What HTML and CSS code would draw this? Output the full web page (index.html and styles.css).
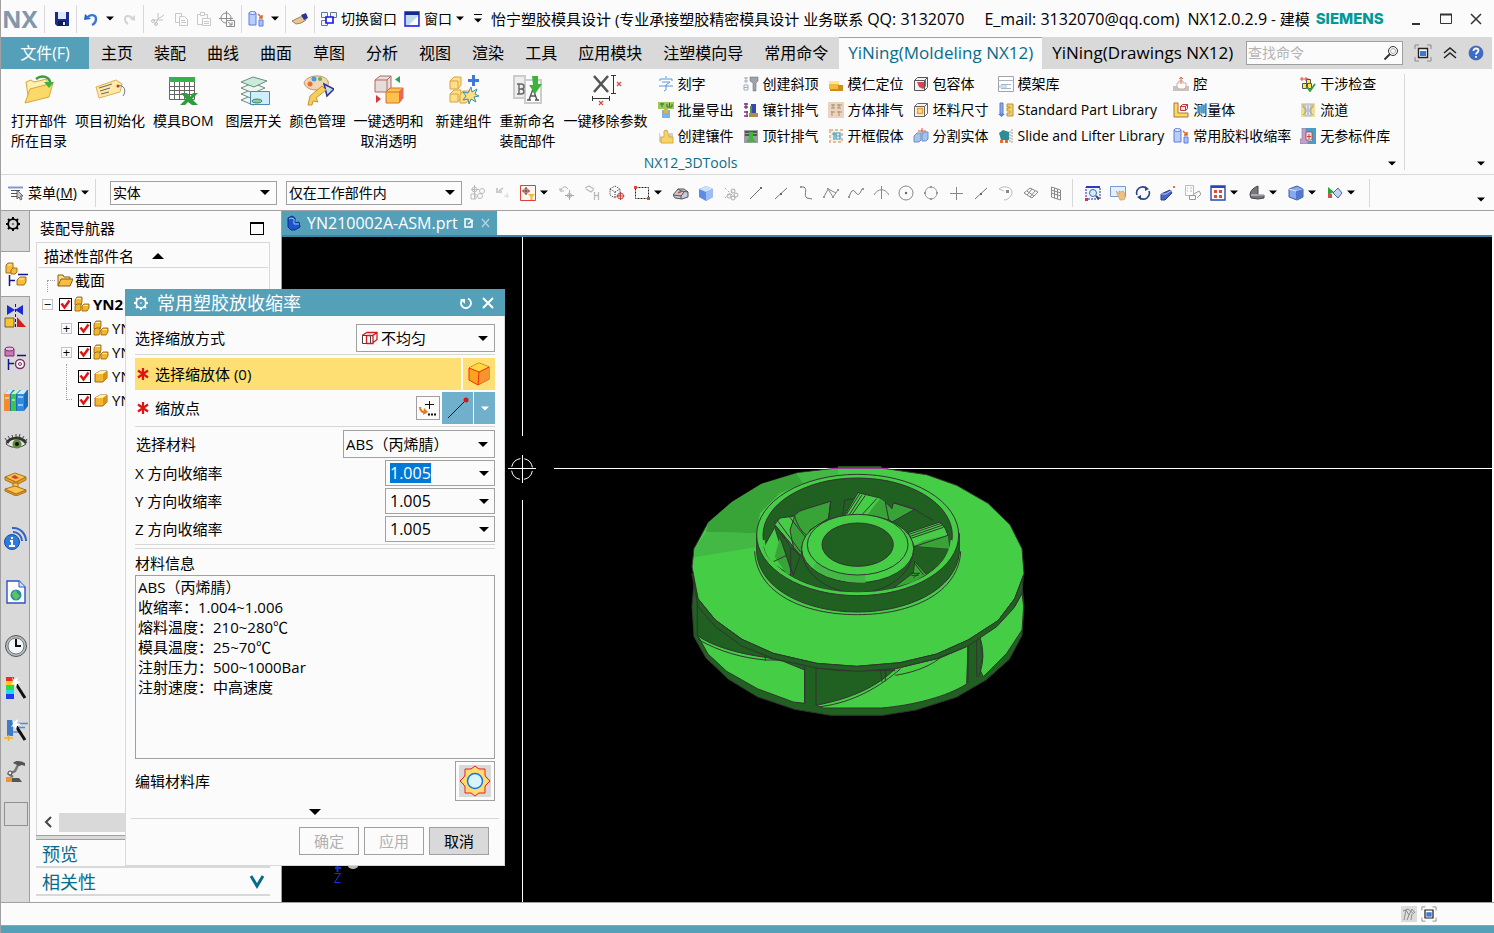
FILE: index.html
```html
<!DOCTYPE html>
<html lang="zh-CN">
<head>
  <meta charset="utf-8">
  <title>NX12.0.2.9 - 建模</title>
  <link rel="stylesheet" href="styles.css">
</head>
<body>

  <!-- icons -->
  <svg class="sprite" aria-hidden="true">
    <symbol id="save" viewBox="0 0 16 16"><path d="M1 1h14v14H3l-2-2z" fill="#1c2c8c"/><path d="M4 1h8v7H4z" fill="#dfe9f7"/><path d="M4 10h8v5H4z" fill="#111a4a"/><path d="M9 11h2v3H9z" fill="#dfe9f7"/></symbol>
    <symbol id="undo" viewBox="0 0 16 16"><path d="M1 9l1-6 6 5z" fill="#2a62c4"/><path d="M4 7c3-4 9-4 9 1 0 3-2 5-4 6" fill="none" stroke="#3a76d4" stroke-width="2.4"/></symbol>
    <symbol id="redo" viewBox="0 0 16 16"><path d="M14 10V4L9 8z" fill="#d4d4d4"/><path d="M12 8C9 4 4 4 4 8c0 2 1 4 3 5" fill="none" stroke="#d4d4d4" stroke-width="2"/></symbol>
    <symbol id="cut" viewBox="0 0 16 16"><g fill="none" stroke="#c4c4c4"><path d="M2 9h11M8 2v6l6-4M8 8l-3 6"/><circle cx="3" cy="10" r="1.5"/><circle cx="6" cy="13" r="1.5"/></g></symbol>
    <symbol id="copy" viewBox="0 0 16 16"><g fill="#fbfbfb" stroke="#c8c8c8"><path d="M2.500 2.500h6v9h-6z"/><path d="M6.500 5.500h5l3 3v6h-8z"/><path d="M8 9.500h4M8 11.500h5"/></g></symbol>
    <symbol id="paste" viewBox="0 0 16 16"><g fill="#fbfbfb" stroke="#c8c8c8"><path d="M1.500 3.500h10v10h-10z"/><path d="M4.500 1.500h4v3h-4z"/><path d="M6.500 7.500h8v7h-8zM8 10.500h5M8 12.500h5"/></g></symbol>
    <symbol id="snap" viewBox="0 0 16 16"><g fill="none" stroke="#8c8c8c"><circle cx="7" cy="7" r="5"/><path d="M7.500 0v14M0 7.500h14"/><path d="M7.500 9.500h8v6h-8z" fill="#fbfbfb"/><path d="M9 11l4 3M13 11v3h-3"/></g></symbol>
    <symbol id="shrink" viewBox="0 0 16 16"><path d="M1 2h7v12H1z" fill="#b9cdfa" stroke="#5c7ce0"/><ellipse cx="4.500" cy="2" rx="3.500" ry="1.500" fill="#e8effe" stroke="#5c7ce0"/><path d="M11 9h4v6h-4z" fill="#a9c2fa" stroke="#5c7ce0"/><path d="M10 3l4 4m0-3v3h-3" fill="none" stroke="#e0622a" stroke-width="1.400"/></symbol>
    <symbol id="touch" viewBox="0 0 16 16"><path d="M0 10l8-4 5-1 1 4-5 3-5 1z" fill="#eac491" stroke="#8a6a48" stroke-width=".8"/><path d="M9 4l5-2 2 5-4 2z" fill="#27359b"/></symbol>
    <symbol id="switchwin" viewBox="0 0 16 16"><g fill="#eef2fa" stroke="#6c7890"><path d="M.5 1.500h6v5h-6zM9.500 1.500h6v5h-6zM.5 9.500h6v5h-6z"/></g><path d="M5 6h7v6H5z" fill="#fff" stroke="#1414f0" stroke-width="1.600"/></symbol>
    <symbol id="win" viewBox="0 0 16 16"><path d="M1 1h14v14H1z" fill="#bfdcea" stroke="#1414f0" stroke-width="1.400"/><path d="M5 14L14 5v9z" fill="#fff"/><path d="M1 1h14v3H1z" fill="#142a8c"/></symbol>
    <symbol id="lens" viewBox="0 0 16 16"><g fill="none" stroke="#333"><circle cx="10" cy="6" r="4.500"/><circle cx="10" cy="6" r="2.500" stroke="#999" stroke-width=".8"/><path d="M7 9l-5.500 5.500" stroke-width="2"/></g></symbol>
    <symbol id="fit" viewBox="0 0 18 18"><path d="M1 5V1h4M13 1h4v4M17 13v4h-4M5 17H1v-4" fill="none" stroke="#888"/><path d="M4.500 4.500h9v9h-9z" fill="#fff" stroke="#222" stroke-width="1.400"/><path d="M6 7h6v5H6z" fill="#3c78d8"/></symbol>
    <symbol id="help" viewBox="0 0 16 16"><circle cx="8" cy="8" r="7" fill="#3c6cc8" stroke="#2a4c9c" stroke-width=".6"/><path d="M5.500 6c0-3.500 5-3 5-.4C10.500 7.500 8 7.400 8 9.500M8 11v1.800" fill="none" stroke="#fff" stroke-width="1.800"/></symbol>

    <symbol id="b-folder" viewBox="0 0 32 32"><path d="M3 8l5-2 3 2 13-3v10L6 28z" fill="#fff0b0" stroke="#d5a63a"/><path d="M2 29l5-14 23-6-4 14z" fill="#fbd968" stroke="#d5a63a"/><path d="M13 5c6-5 14-2 14 4" fill="none" stroke="#3c9c3c" stroke-width="2.500"/><path d="M21 8h10l-5 6z" fill="#3cb43c"/></symbol>
    <symbol id="b-tag" viewBox="0 0 32 32"><path d="M2 13l20-7 6 4-2 8-21 6z" fill="#ffe9a8" stroke="#e0b050"/><path d="M5 14l13-4M6 17l10-3M7 20l8-2" stroke="#666"/><circle cx="24" cy="12" r="1.500" fill="#b03030"/><path d="M24 12c6-2 9 5 5 10" fill="none" stroke="#777"/></symbol>
    <symbol id="b-bom" viewBox="0 0 32 32"><path d="M2.500 3.500h25v22h-25z" fill="#fff" stroke="#666"/><path d="M2 3h26v5H2z" fill="#36b24a"/><path d="M2 12.500h26M2 16.500h26M2 20.500h26M7.500 8v18M12.500 8v18M17.500 8v18M22.500 8v18" stroke="#666"/><path d="M14 19h6l3 4 3-4h5l-6 6 6 6h-6l-4-3-3 3h-5l6-6z" fill="#2c9c3c"/></symbol>
    <symbol id="b-layer" viewBox="0 0 32 32"><g fill="#eef6ee" stroke="#6c8c84"><path d="M3 26l12-5 12 5-12 5z"/><path d="M3 20l12-5 12 5-12 5z"/><path d="M3 14l12-5 12 5-12 5z"/><path d="M3 8l12-5 14 4-13 6z" fill="#c9ecd8"/></g><path d="M12.500 17.500h19v13h-19z" fill="#cdeefa" stroke="#4a8cb4"/><ellipse cx="19" cy="27" rx="5" ry="2" fill="#8ccaa4" stroke="#4a8c64"/></symbol>
    <symbol id="b-color" viewBox="0 0 32 32"><path d="M2 9C4 1 22-1 26 7c2 6-4 6-8 8S4 16 2 9z" fill="#f3d5b4" stroke="#c8935c"/><circle cx="8" cy="10" r="2.500" fill="#e07040"/><circle cx="12" cy="5" r="2.500" fill="#3c9cf0"/><circle cx="18" cy="5" r="2" fill="#58b858"/><path d="M22 10l10 5-7 7z" fill="#d0d8f4" stroke="#24348c" stroke-width="1.500"/><path d="M6 31l2-9 12-10 4 4-10 8 2 4-5-1-1 4z" fill="#f4cf5c" stroke="#c89434"/></symbol>
    <symbol id="b-trans" viewBox="0 0 32 32"><path d="M2 6l5-4h11v12l-4 4H2z" fill="#e6dcdc" stroke="#b06a5c"/><path d="M2 6h12v12M14 6l4-4" fill="none" stroke="#b06a5c"/><path d="M13 18l4-4h13v10l-4 5H13z" fill="#fbc34c" stroke="#d8702c"/><path d="M13 18h13l4-4" fill="none" stroke="#d8702c"/><path d="M26 18v11l4-5V14z" fill="#e8685c"/><path d="M27 2v7l-5-3.500z" fill="#2ca44c"/><path d="M3 21v8l5-4z" fill="#d03c3c"/></symbol>
    <symbol id="b-new" viewBox="0 0 32 32"><g fill="#ffe08a" stroke="#d8a23c"><path d="M2 7l4-4h7v8l-3 4H2z"/><path d="M2 20l4-4h7v8l-3 4H2z"/><path d="M12 21l3-4h6v8l-3 4h-6z"/><path d="M2 7h8v7M2 20h8v7" fill="none"/></g><path d="M25.500 1v11M20 6.500h11" stroke="#3c78e0" stroke-width="3"/><path d="M23 13l1 5 5-3-2 5 4 2-5 1 2 5-5-3-2 5-1-5-5 1 3-4-3-4 5 1z" fill="#fbe07c" stroke="#3c8cc0"/></symbol>
    <symbol id="b-rename" viewBox="0 0 32 32"><path d="M2 2h11v22H2z" fill="#eee" stroke="#ccc" stroke-width="2"/><path d="M13 6h16v23H13z" fill="#fbfbfb" stroke="#ccc" stroke-width="2"/><path d="M7 10v10M5 10h4c4 0 4 5 0 5H7M9 15c4 0 4 5 0 5H5" fill="none" stroke="#666" stroke-width="1.400"/><path d="M17 26l4-11 4 11M18 22h6M15 26h4M23 26h4" fill="none" stroke="#555" stroke-width="1.400"/><path d="M20 2h6v8h4l-7 10-6-9h4z" fill="#3cb43c"/></symbol>
    <symbol id="b-param" viewBox="0 0 32 32"><path d="M4 2l14 16M18 2L4 18" stroke="#555" stroke-width="2.600"/><path d="M23.500 2v17M21 1.500h5M21 19.500h5M2 24.500h18M2.500 22v5M19.500 22v5" stroke="#333"/><path d="M27 8l4 4m0-4l-4 4M9 27l4 4m0-4l-4 4" stroke="#d84c3c" stroke-width="1.200"/></symbol>

    <symbol id="s-char" viewBox="0 0 16 16"><path d="M8 0v2M2 5V3h12v2M4 6h8L8 9v5l-2 1M1 10h14" fill="none" stroke="#5a96d8"/></symbol>
    <symbol id="s-export" viewBox="0 0 16 16"><path d="M0 0h16v7H0z" fill="#9cc85c"/><path d="M2 2h4M4 1v4M9 2v3h5V2M11.500 1v4" stroke="#40702c" fill="none"/><path d="M4 8h8v8H4z" fill="#7ab6dc"/><path d="M6 7h4v4H6z" fill="#f2ab3c"/></symbol>
    <symbol id="s-insert" viewBox="0 0 16 16"><path d="M1 4l4 10H1zM11 5h4v9h-4z" fill="#cbd0d4"/><path d="M3 15V9h3V3l3-1 2 7h4v6z" fill="#f7d468" stroke="#dca83c"/></symbol>
    <symbol id="s-lifter" viewBox="0 0 16 16"><path d="M1 2h4M1 5h4M3 1v6M1 9h4v5H1zM1 11.500h4" fill="none" stroke="#9cb0c4"/><path d="M7 1h8v4l-2 2v8h-3V7L7 5z" fill="#9ea3a5" stroke="#75797c" stroke-width=".6"/></symbol>
    <symbol id="s-pin" viewBox="0 0 16 16"><path d="M1 2h4M1 5h4M3 1v6M1 10h4M1 14h4M4 9v6" stroke="#84307c" stroke-width="1.300"/><path d="M8 2h5v9H8z" fill="#3a45b0"/><path d="M7 4h2v8H7z" fill="#3c9c44"/><path d="M6 11h9v4H6z" fill="#b08c4c"/></symbol>
    <symbol id="s-ejector" viewBox="0 0 16 16"><path d="M1 2h14v13H1z" fill="#9a9fa0"/><path d="M2 4h12M2 7h4M10 7h4" stroke="#555" stroke-width="2"/><path d="M6 4h4v6l3 4H3l3-4z" fill="#3cb83c"/></symbol>
    <symbol id="s-core" viewBox="0 0 16 16"><path d="M1 5h10v8H1z" fill="#f2bd3c"/><path d="M1 5h10v3H1z" fill="#ffe48c"/><path d="M10 9h5v6H2v-2h8z" fill="#cf8c1c"/></symbol>
    <symbol id="s-block" viewBox="0 0 16 16"><path d="M0 0h16v16H0z" fill="#ecd4bc"/><path d="M3 3h4M5 2v4M9 3h5M11 2v4M3 10h4M4 9v5M9 10h5M11 9v5M3 6h4M9 6h4" stroke="#a4907c"/></symbol>
    <symbol id="s-frame" viewBox="0 0 16 16"><path d="M2 2h12v12H2z" fill="#f8f0e0" stroke="#e8bc98" stroke-width="2" stroke-dasharray="3 2"/><path d="M4 6h4M6 4v8M8 5h4v6H8zM8 8h4" fill="none" stroke="#3c9cc8" stroke-width="1.200"/></symbol>
    <symbol id="s-bound" viewBox="0 0 16 16"><path d="M1.500 4.500l3-3h10v10l-3 3h-10z" fill="#f3f3f3" stroke="#555"/><path d="M4 6h7l2-3v7l-3 3-4-2z" fill="#d84454"/><path d="M1.500 4.500h10v10M11.500 4.500l3-3" fill="none" stroke="#555"/></symbol>
    <symbol id="s-stock" viewBox="0 0 16 16"><path d="M1.500 4.500l3-3h10v10l-3 3h-10z" fill="#f6f6f6" stroke="#666"/><path d="M4.500 6.500h5v5h-5z" fill="#ffe07c" stroke="#e8a03c" stroke-width="1.400"/><path d="M1.500 4.500h10v10M11.500 4.500l3-3" fill="none" stroke="#666"/></symbol>
    <symbol id="s-split" viewBox="0 0 16 16"><path d="M1 8l3-3h4v7l-2 2H1zM9 7l2-3h4v7l-2 2H9z" fill="#a4c4ee" stroke="#6c90c4"/><path d="M5 3h8M9 0v6" stroke="#d8503c"/></symbol>
    <symbol id="s-base" viewBox="0 0 16 16"><path d="M.5.5h15v15H.5z" fill="#fff" stroke="#a0a4ac"/><path d="M0 4.500h16M3 8.500h10M3 12.500h10" stroke="#a8b4c4"/><path d="M1 9h8v3H1z" fill="#c8dcf4"/></symbol>
    <symbol id="s-std" viewBox="0 0 16 16"><path d="M2 1h3v11H2z" fill="#8caae8" stroke="#5c7cc4"/><path d="M0 12h7l-3.500 3z" fill="#5c84d8"/><path d="M9 2h6v12H9v-3h3V9H9V6h3V5H9z" fill="#f4cf68" stroke="#b8903c"/></symbol>
    <symbol id="s-slide" viewBox="0 0 16 16"><path d="M1 5l4-3 6 2v8H3z" fill="#2e8c94"/><path d="M2 12h3v3H2zM7 12h3v3H7z" fill="#e0702c"/><path d="M14 1v14M12 3v12" stroke="#999" stroke-dasharray="2 1"/></symbol>
    <symbol id="s-cavity" viewBox="0 0 16 16"><path d="M0 10h16v5H0z" fill="#c4c4c4"/><path d="M4 11V7h2V5h4v2h3v4l-2 2H6z" fill="#fff" stroke="#d8a898"/><path d="M8 8V1M6 3l2-2 2 2" fill="none" stroke="#d8684c"/></symbol>
    <symbol id="s-measure" viewBox="0 0 16 16"><path d="M1 1h4v10h10v4H1z" fill="#ffd868" stroke="#a8782c"/><path d="M7.500 4.500l2-2h5v4l-2 2h-5zM7.500 4.500h5v4M12.500 4.500l2-2" fill="#fbeaea" stroke="#c8303c"/></symbol>
    <symbol id="s-check" viewBox="0 0 16 16"><path d="M2 1v4M0 3h4M6 1v4M4 3h5" stroke="#d8503c"/><path d="M6.500 3.500h4v4h-4zM2.500 7.500h4v5h-4zM7.500 7.500h4v5h-4z" fill="#ffe454" stroke="#555"/><path d="M7 11l3 4 5-7" fill="none" stroke="#2ca43c" stroke-width="1.800"/></symbol>
    <symbol id="s-runner" viewBox="0 0 16 16"><path d="M1 1h4v14H1zM11 1h4v14h-4z" fill="#f0e08c"/><path d="M5 2h6v12H5z" fill="#e4e8ec" stroke="#aaa"/><path d="M3 2v3l3 2v3l-3 3M13 2v3l-3 2v3l3 3M8 3v10" fill="none" stroke="#9ca0a4"/></symbol>
    <symbol id="s-lib" viewBox="0 0 16 16"><path d="M2 0h4v11h2v5H0v-5h2z" fill="#c0a0cc" stroke="#8c6c9c" stroke-width=".6"/><path d="M6 0h10v16H8v-3h4V4H6z" fill="#4c9cc8"/><path d="M6 4h6v8H6z" fill="#f4e4e4" stroke="#b43c4c" stroke-width=".8"/><path d="M7 8.500h4M9 6v5" stroke="#c83c3c"/></symbol>

    <symbol id="t-menu" viewBox="0 0 16 16"><path d="M0 2.500h15" stroke="#7c9cd8" stroke-width="2"/><path d="M3 5.500h9M3 8.500h6M3 11.500h6" stroke="#555"/><path d="M9 5v9l2-2 1.500 3 1.500-1-1.500-3H15z" fill="#ccc" stroke="#444" stroke-width=".8"/></symbol>
    <symbol id="t-filter" viewBox="0 0 16 16"><g fill="none" stroke="#bbb"><path d="M1 4.500h8M4.500 0v14M1 9h5v5H1z"/><circle cx="4.500" cy="4.500" r="2.500"/><circle cx="12" cy="6" r="2.500"/><circle cx="10" cy="11" r="2.500"/></g></symbol>
    <symbol id="t-reset" viewBox="0 0 16 16"><path d="M2 3v4h5M4 6l4-3" fill="none" stroke="#ccc" stroke-width="2"/><path d="M12 8v5M9 11h5" stroke="#d8d8d8"/></symbol>
    <symbol id="t-snap" viewBox="0 0 16 16"><path d="M.5.5h15v15H.5z" fill="#fff6f4" stroke="#d8443c"/><path d="M6 2v8M2 6h8" stroke="#333"/><circle cx="6" cy="6" r="2.500" fill="none" stroke="#c84c3c"/><path d="M8 9h7l-2.500 3v3h-2v-3z" fill="#f4b83c"/></symbol>
    <symbol id="t-origin" viewBox="0 0 16 16"><path d="M1 3v3h4M2 5c2-4 5-4 7-1M10.500 5v10M6 10.500h9" fill="none" stroke="#aaa"/><circle cx="10.500" cy="10.500" r="2" fill="none" stroke="#aaa"/></symbol>
    <symbol id="t-hist" viewBox="0 0 16 16"><path d="M1 3l4-2 5 3M2 4l5 3 3-3M10.500 7v8M14.500 7v8M10 10.500h5" fill="none" stroke="#bbb" stroke-width="1.300"/></symbol>
    <symbol id="t-cubesel" viewBox="0 0 16 16"><path d="M1 4l5-3 5 3v6l-5 3-5-3zM1 4l5 3 5-3M6 7v6" fill="none" stroke="#333" stroke-dasharray="1 1"/><circle cx="11.500" cy="11" r="3" fill="none" stroke="#c83c3c"/><path d="M11.500 7v8M7.500 11h8" stroke="#c83c3c"/></symbol>
    <symbol id="t-rect" viewBox="0 0 16 16"><path d="M1.500 2.500h13v11h-13z" fill="none" stroke="#222" stroke-dasharray="2 1"/><path d="M0 1h3v3H0zM13 12h3v3h-3z" fill="#d84c3c"/></symbol>
    <symbol id="t-highlight" viewBox="0 0 16 16"><path d="M0 10l5-6h6l4 3v5l-6 2-7-1z" fill="#c4ccd8" stroke="#555"/><path d="M0 10l8 1 3-4M8 11v3M5 4l3 2 7 1" fill="none" stroke="#555"/><path d="M5 8l4-2" stroke="#d84c3c" stroke-width="1.500"/></symbol>
    <symbol id="t-solid" viewBox="0 0 16 16"><path d="M1 4l7-3 7 3v8l-7 4-7-4z" fill="#5c8ce4"/><path d="M1 4l7-3 7 3-7 3z" fill="#cfe0fb"/><path d="M8 7l7-3v8l-7 4z" fill="#9cbcf4"/></symbol>
    <symbol id="t-nodes" viewBox="0 0 16 16"><g fill="none" stroke="#aaa"><path d="M2 3l10 10M2 13l10-9" stroke-dasharray="2 2"/><circle cx="6" cy="11" r="2"/><circle cx="10" cy="6" r="2"/><circle cx="13" cy="10" r="2"/><circle cx="10" cy="13" r="2"/></g></symbol>
    <symbol id="t-line" viewBox="0 0 16 16"><path d="M2 14L13 3" stroke="#777"/><path d="M12 2h2v2h-2z" fill="#666"/></symbol>
    <symbol id="t-mid" viewBox="0 0 16 16"><path d="M2 14L14 3" stroke="#777"/><path d="M7 8h2v2H7z" fill="#666"/></symbol>
    <symbol id="t-hook" viewBox="0 0 16 16"><path d="M3 2h3c4 3-1 8 3 11l5 1" fill="none" stroke="#777"/><path d="M2 1h2v2H2z" fill="#999"/></symbol>
    <symbol id="t-poly" viewBox="0 0 16 16"><path d="M1 12l4-8 5 8 5-7M5 4l8 4" fill="none" stroke="#888"/><g fill="#999"><path d="M0 11h2v2H0zM4 3h2v2H4zM9 11h2v2H9zM14 4h2v2h-2z"/></g></symbol>
    <symbol id="t-spline" viewBox="0 0 16 16"><path d="M1 12c3-9 5-7 7-4s4 1 6-4" fill="none" stroke="#777"/><path d="M0 11h2v2H0zM14 3h2v2h-2z" fill="#999"/></symbol>
    <symbol id="t-cross" viewBox="0 0 16 16"><path d="M8.500 1v13M1 10c4-7 11-7 15 0" fill="none" stroke="#888"/></symbol>
    <symbol id="t-circle" viewBox="0 0 16 16"><circle cx="8" cy="8" r="7" fill="none" stroke="#888"/><circle cx="8" cy="8" r="1.200" fill="#666"/></symbol>
    <symbol id="t-quad" viewBox="0 0 16 16"><circle cx="8" cy="8" r="6" fill="none" stroke="#999"/><g fill="#999"><path d="M7 1h2v2H7zM7 13h2v2H7zM1 7h2v2H1zM13 7h2v2h-2z"/></g></symbol>
    <symbol id="t-plus" viewBox="0 0 16 16"><path d="M8.500 2v13M2 8.500h13" stroke="#888"/></symbol>
    <symbol id="t-tangent" viewBox="0 0 16 16"><path d="M1 4c4-4 13-2 13 3M1 4l5 2M14 7c0 4-4 8-8 8" fill="none" stroke="#bbb"/><path d="M8 5h3v3H8z" fill="#888"/></symbol>
    <symbol id="t-face" viewBox="0 0 16 16"><path d="M1 8l6-5 8 4-6 6zM4 6l7 5M9 4l-5 6M12 6l-5 6" fill="none" stroke="#888"/></symbol>
    <symbol id="t-grid" viewBox="0 0 16 16"><path d="M3.500 2l9 3v10l-9-3zM3 5l10 3M3 8l10 3M6.500 3v10M9.500 4v10" fill="none" stroke="#888"/></symbol>
    <symbol id="v-fit" viewBox="0 0 16 16"><path d="M1 2h14v12H1z" fill="#eef4ff" stroke="#1c2cac" stroke-dasharray="2 1"/><path d="M1 1h14v2H1z" fill="#2c3cc0"/><circle cx="8" cy="8" r="3.500" fill="#d4ecf8" stroke="#3c6cac"/><path d="M11 11l3 3" stroke="#444" stroke-width="2"/><path d="M0 13h3v3H0z" fill="#c83c3c"/></symbol>
    <symbol id="v-pan" viewBox="0 0 16 16"><path d="M.5 1.500h15v10H.5z" fill="#e4effa" stroke="#7c98d4"/><path d="M6 6l3 3V6l2 1 2-1 2 3v5l-2 1h-3z" fill="#eec088" stroke="#c8944c" stroke-width=".6"/></symbol>
    <symbol id="v-rotate" viewBox="0 0 16 16"><path d="M2 10a6 6 0 0 1 9-7M14 6a6 6 0 0 1-9 7" fill="none" stroke="#28458c" stroke-width="1.600"/><path d="M10 1l4 3-4 2zM6 10v5l-4-3z" fill="#28458c"/></symbol>
    <symbol id="v-persp" viewBox="0 0 16 16"><path d="M1 9l9-4 2 3-7 7H1z" fill="#4c64c8" stroke="#2c3c8c"/><path d="M1 9h5l6-4" fill="none" stroke="#b8c8f4"/><path d="M13 1h2v2h-2z" fill="#e06c5c"/></symbol>
    <symbol id="v-replace" viewBox="0 0 16 16"><path d="M.5.5h8v10h-8zM2 3h1M5 3h2M2 6h1M5 6h2" fill="none" stroke="#bbb"/><path d="M4.500 10.500h6v4h-6zM9 9l5-3 2 3-4 4" fill="none" stroke="#999"/></symbol>
    <symbol id="v-layout" viewBox="0 0 16 16"><path d="M1 1h14v14H1z" fill="#fff" stroke="#2848b8" stroke-width="1.400"/><path d="M1 1h14v2H1z" fill="#2848b8"/><path d="M4 5h3v3H4zM9 5h3v3H9zM4 10h3v3H4zM9 10h3v3H9z" fill="#d84c3c"/></symbol>
    <symbol id="v-section" viewBox="0 0 16 16"><path d="M1 10c0-5 5-8 8-9v9h6v3l-6 1-7-1z" fill="#74787c" stroke="#444"/><path d="M2 10h13" stroke="#ddd"/></symbol>
    <symbol id="v-shade" viewBox="0 0 16 16"><path d="M1 4l8-3 6 3v8l-6 3-8-3z" fill="#86a8ec" stroke="#3c5cac"/><path d="M1 4l7 2 7-2" fill="none" stroke="#dfeaff"/><path d="M8 6v9l7-3V4z" fill="#5478cc"/></symbol>
    <symbol id="v-play" viewBox="0 0 16 16"><path d="M1 2l6 5-6 3z" fill="#2ca43c"/><path d="M1 9h4v4H1z" fill="#d84c4c"/><path d="M6 8l5-5 4 5-4 5z" fill="#c4d4f0" stroke="#4c6490"/></symbol>

    <symbol id="gear" viewBox="0 0 16 16"><circle cx="8" cy="8" r="4.800" fill="none" stroke="currentColor" stroke-width="1.800"/><circle cx="8" cy="8" r=".8" fill="currentColor"/><path d="M8 1v2M8 13v2M1 8h2M13 8h2M3 3l1.500 1.500M11.500 11.500L13 13M13 3l-1.500 1.500M4.500 11.500L3 13" stroke="currentColor" stroke-width="2"/></symbol>
    <symbol id="asm" viewBox="0 0 16 16"><g fill="#f4b62c" stroke="#8c5c10" stroke-width=".8"><path d="M1 4l2-3h5v5l-1 3H1z"/><path d="M1 10l2-2h4v5l-1 2H1z"/><path d="M8 10l2-2h5v4l-2 3H8z"/></g><path d="M3 2h4v1H2zM10 9h4v1h-5z" fill="#fff0b4"/></symbol>
    <symbol id="part" viewBox="0 0 16 16"><path d="M2 6l5-3h7v7l-4 4H2z" fill="#f4b62c" stroke="#8c5c10" stroke-width=".9"/><path d="M2 6l5-3h7l-4 3z" fill="#fff0b4"/><path d="M10 6v8l4-4V3z" fill="#d8931c"/></symbol>
    <symbol id="folder" viewBox="0 0 16 16"><path d="M1 14V3h5l1 2h6v3" fill="#fbe08c" stroke="#8c5c10"/><path d="M1 14l3-7h12l-3 7z" fill="#f8bf3c" stroke="#8c5c10"/></symbol>

    <symbol id="r-asm" viewBox="0 0 24 24"><g fill="#f7bd3c" stroke="#9c6410" stroke-width=".9"><path d="M2 3l2-2h5v6l-1 4H2z"/><path d="M7 8l2-2h4v4l-2 2H7z"/><path d="M13 18l3-3h6v5l-2 3h-7z"/></g><path d="M4 3h4M15 17h5" stroke="#fff0b4"/><path d="M14 12.500h10M5.500 13v11M6 18.500h5" stroke="#14148c" stroke-width="1.500"/></symbol>
    <symbol id="r-constr" viewBox="0 0 24 24"><path d="M3 1l8 5-8 5zM19 1l-8 5 8 5z" fill="#1c2cd0"/><path d="M11.500 0v24" stroke="#222" stroke-dasharray="3 2"/><path d="M1 14h9v9H1z" fill="#fbc32c" stroke="#333" stroke-width=".7"/><path d="M13 13l9 10h-9z" fill="#d81c1c"/></symbol>
    <symbol id="r-part" viewBox="0 0 24 24"><path d="M1 3h9v7H1z" fill="#c878b4" stroke="#7c2c6c"/><ellipse cx="5.500" cy="3" rx="4.500" ry="2" fill="#eabce0" stroke="#7c2c6c"/><path d="M13 9.500h9M4.500 13v11M5 17.500h5" stroke="#14148c" stroke-width="1.500"/><circle cx="16" cy="18" r="4.500" fill="#fff" stroke="#7c2c6c" stroke-width="1.500"/><circle cx="16" cy="18" r="1.500" fill="none" stroke="#7c2c6c"/></symbol>
    <symbol id="r-books" viewBox="0 0 24 24"><path d="M0 6l4-4h20v16l-4 5H0z" fill="#1c6cb8"/><path d="M0 6h6v17H0z" fill="#f08c2c"/><path d="M7 6h5v17H7z" fill="#3cc44c"/><path d="M13 6h7v17h-7z" fill="#2c8ce4"/><path d="M0 6l4-4h5L6 6zM13 6l4-4h6l-3 4z" fill="#cfe8fb"/><path d="M7 6l4-4h5l-4 4z" fill="#c4f4c4"/><path d="M1 10h4M8 12h3M14 9h5M14 17h5" stroke="#fff"/></symbol>
    <symbol id="r-eye" viewBox="0 0 24 24"><path d="M2 14c5-7 15-8 20 0-5 4-14 5-20 0z" fill="#e8e8e0" stroke="#444"/><circle cx="13" cy="14" r="4.500" fill="#5c8c3c"/><circle cx="13" cy="14" r="2" fill="#111"/><path d="M3 13C6 7 17 6 22 13" fill="none" stroke="#333" stroke-width="3"/><path d="M3 11l-2-3M6 9L4 6M9 8L8 5M12 7V4M15 8l1-4M18 9l2-3M21 12l2-3" stroke="#444"/></symbol>
    <symbol id="r-reuse" viewBox="0 0 24 24"><g fill="#fbc34c" stroke="#a8741c"><path d="M1 5v3l11 5 10-5V5l-10 5z" fill="#e89c2c"/><path d="M1 5l10-4 11 4-10 5z"/><path d="M9 11h5v5H9z"/><path d="M1 17v2l11 5 10-4v-2l-10 4z" fill="#e89c2c"/><path d="M1 17l10-3 11 4-10 4z"/></g><path d="M7 5l4-2 4 3-4 1z" fill="#d83c2c"/></symbol>
    <symbol id="r-info" viewBox="0 0 24 24"><g fill="none" stroke="#2c64c8" stroke-width="2"><path d="M8 2c8-1 14 6 14 13M9 6c5 0 9 4 9 9"/></g><circle cx="8" cy="16" r="7.500" fill="#2c7ce0" stroke="#1c4c9c"/><path d="M8 11v2M6 15h2v5M5 20h6" fill="none" stroke="#fff" stroke-width="2"/></symbol>
    <symbol id="r-web" viewBox="0 0 24 24"><path d="M3 1h12l6 6v16H3z" fill="#fff" stroke="#2c54c0" stroke-width="1.400"/><path d="M15 1v6h6" fill="#cfe0fb" stroke="#2c54c0"/><circle cx="12" cy="15" r="5.500" fill="#2c8ca8"/><path d="M8 13l4-3 1 3 3 3-4 4-3-3z" fill="#5cc45c"/></symbol>
    <symbol id="r-clock" viewBox="0 0 24 24"><circle cx="12" cy="12" r="10.500" fill="#b4bcc4" stroke="#555"/><circle cx="12" cy="12" r="8" fill="#f0f6fc" stroke="#777"/><path d="M12 5v7h5" fill="none" stroke="#111" stroke-width="2"/></symbol>
    <symbol id="r-spectrum" viewBox="0 0 24 24"><path d="M2 1h8v4H2z" fill="#f02c1c"/><path d="M2 5h8v4H2z" fill="#fbc81c"/><path d="M2 9h8v5H2z" fill="#2cdc3c"/><path d="M2 14h8v4H2z" fill="#1cdcf0"/><path d="M2 18h8v5H2z" fill="#1c3cf0"/><path d="M12 8l9 14" stroke="#111" stroke-width="3"/><path d="M8 1l2 3 4-3-1 4 4 1-4 2-1 4-2-4-3 1 2-3z" fill="#fff"/></symbol>
    <symbol id="r-role" viewBox="0 0 24 24"><path d="M3 2h6v16H3z" fill="#3c7cc8"/><path d="M12 5.500h12M12 9.500h9M9 14h8" stroke="#4c8ce0" stroke-width="1.500"/><path d="M12 8l9 14" stroke="#111" stroke-width="3"/><path d="M0 20h9M4.500 17v6" stroke="#f0b42c" stroke-width="1.500"/><path d="M8 1l2 3 4-3-1 4 4 1-4 2-1 4-2-4-3 1 2-3z" fill="#fff"/></symbol>
    <symbol id="r-robot" viewBox="0 0 24 24"><path d="M4 22h14l-3-4H5z" fill="#555"/><path d="M9 17l-4-3 6-3 4-8" fill="none" stroke="#777" stroke-width="2.500"/><path d="M9 3c3-3 8-2 12 0v3l-3-1-3 1z" fill="#555"/><path d="M2 17h6v5H2z" fill="#f0942c"/><circle cx="6" cy="13" r="2" fill="#eee" stroke="#444"/></symbol>
    <symbol id="star" viewBox="0 0 12 12"><path d="M6 0v12M1 2.500l10 7M11 2.500l-10 7" stroke="#e01414" stroke-width="2.200"/></symbol>
    <symbol id="down" viewBox="0 0 10 5"><path d="M0 0h10L5 5z" fill="currentColor"/></symbol>
  </svg>

  <!-- quick access + title -->
  <header class="titlebar">
    <span class="logo">NX</span>
    <i class="sep"></i>
    <div class="group save-group">
      <button class="tool" aria-label="保存"><svg><use href="#save"/></svg></button>
    </div>
    <i class="sep"></i>
    <div class="group">
      <button class="tool"><svg><use href="#undo"/></svg></button>
      <button class="drop"><svg><use href="#down"/></svg></button>
      <button class="tool"><svg><use href="#redo"/></svg></button>
    </div>
    <i class="sep"></i>
    <div class="group">
      <button class="tool"><svg><use href="#cut"/></svg></button>
      <button class="tool"><svg><use href="#copy"/></svg></button>
      <button class="tool"><svg><use href="#paste"/></svg></button>
      <button class="tool"><svg><use href="#snap"/></svg></button>
    </div>
    <i class="sep"></i>
    <div class="group">
      <button class="tool"><svg><use href="#shrink"/></svg></button>
      <button class="drop"><svg><use href="#down"/></svg></button>
    </div>
    <i class="sep"></i>
    <div class="group">
      <button class="tool"><svg><use href="#touch"/></svg></button>
    </div>
    <i class="sep"></i>
    <div class="group">
      <button class="text-tool"><svg><use href="#switchwin"/></svg>切换窗口</button>
      <button class="text-tool"><svg><use href="#win"/></svg>窗口<svg class="caret"><use href="#down"/></svg></button>
      <button class="drop more"><svg><use href="#down"/></svg></button>
    </div>
    <h1 class="title"><span>怡宁塑胶模具设计 (专业承接塑胶精密模具设计 业务联系 <span class="latin">QQ: 3132070</span></span><span class="latin">E_mail: 3132070@qq.com)</span></h1>
    <span class="version"><span class="latin">NX12.0.2.9</span> - 建模</span>
    <span class="siemens">SIEMENS</span>
    <div class="window-buttons">
      <button aria-label="最小化"><svg viewBox="0 0 14 14"><path d="M3 12h8" stroke="#333" stroke-width="2"/></svg></button>
      <button aria-label="最大化"><svg viewBox="0 0 14 14"><path d="M1.500 2.500h11v9h-11z" fill="none" stroke="#333"/><path d="M1 2.500h12" stroke="#333" stroke-width="2"/></svg></button>
      <button aria-label="关闭"><svg viewBox="0 0 14 14"><path d="M2 2l10 10M12 2L2 12" stroke="#333" stroke-width="1.500"/></svg></button>
    </div>
  </header>

  <nav class="tabs">
    <button class="file-tab">文件(F)</button>
    <button>主页</button>
    <button>装配</button>
    <button>曲线</button>
    <button>曲面</button>
    <button>草图</button>
    <button>分析</button>
    <button>视图</button>
    <button>渲染</button>
    <button>工具</button>
    <button>应用模块</button>
    <button>注塑模向导</button>
    <button>常用命令</button>
    <button class="custom active">YiNing(Moldeling NX12)</button>
    <button class="custom">YiNing(Drawings NX12)</button>
    <div class="search">
      <input type="text" placeholder="查找命令" aria-label="查找命令">
      <svg><use href="#lens"/></svg>
    </div>
    <div class="tab-tools">
      <svg class="fit"><use href="#fit"/></svg>
      <svg viewBox="0 0 16 16"><path d="M2 8l6-5 6 5M2 13l6-5 6 5" fill="none" stroke="#222" stroke-width="1.500"/></svg>
      <svg><use href="#help"/></svg>
    </div>
  </nav>

  <section class="ribbon">
    <div class="ribbon-group">
      <div class="ribbon-body">
        <div class="big-buttons">
          <button><svg><use href="#b-folder"/></svg>打开部件<br>所在目录</button>
          <button><svg><use href="#b-tag"/></svg>项目初始化</button>
          <button class="wide"><svg><use href="#b-bom"/></svg>模具BOM</button>
          <button><svg><use href="#b-layer"/></svg>图层开关</button>
          <button><svg><use href="#b-color"/></svg>颜色管理</button>
          <button class="wide"><svg><use href="#b-trans"/></svg>一键透明和<br>取消透明</button>
          <button><svg><use href="#b-new"/></svg>新建组件</button>
          <button><svg><use href="#b-rename"/></svg>重新命名<br>装配部件</button>
          <button><svg><use href="#b-param"/></svg>一键移除参数</button>
        </div>
        <div class="small-buttons">
          <button><svg><use href="#s-char"/></svg>刻字</button>
          <button><svg><use href="#s-export"/></svg>批量导出</button>
          <button><svg><use href="#s-insert"/></svg>创建镶件</button>
          <button><svg><use href="#s-lifter"/></svg>创建斜顶</button>
          <button><svg><use href="#s-pin"/></svg>镶针排气</button>
          <button><svg><use href="#s-ejector"/></svg>顶针排气</button>
          <button><svg><use href="#s-core"/></svg>模仁定位</button>
          <button><svg><use href="#s-block"/></svg>方体排气</button>
          <button><svg><use href="#s-frame"/></svg>开框假体</button>
          <button><svg><use href="#s-bound"/></svg>包容体</button>
          <button><svg><use href="#s-stock"/></svg>坯料尺寸</button>
          <button><svg><use href="#s-split"/></svg>分割实体</button>
          <button><svg><use href="#s-base"/></svg>模架库</button>
          <button><svg><use href="#s-std"/></svg>Standard Part Library</button>
          <button><svg><use href="#s-slide"/></svg>Slide and Lifter Library</button>
          <button><svg><use href="#s-cavity"/></svg>腔</button>
          <button><svg><use href="#s-measure"/></svg>测量体</button>
          <button><svg><use href="#shrink"/></svg>常用胶料收缩率</button>
          <button><svg><use href="#s-check"/></svg>干涉检查</button>
          <button><svg><use href="#s-runner"/></svg>流道</button>
          <button><svg><use href="#s-lib"/></svg>无参标件库</button>
        </div>
      </div>
      <div class="ribbon-foot">
        <span>NX12_3DTools</span>
        <button class="drop"><svg><use href="#down"/></svg></button>
      </div>
    </div>
    <button class="drop ribbon-more"><svg><use href="#down"/></svg></button>
  </section>

  <section class="selection-bar">
    <button class="text-tool menu"><svg><use href="#t-menu"/></svg><span>菜单(<u>M</u>)</span><svg class="caret"><use href="#down"/></svg></button>
    <i class="sep"></i>
    <select class="combo type-filter" aria-label="类型过滤器"><option>实体</option></select>
    <select class="combo scope-filter" aria-label="选择范围"><option>仅在工作部件内</option></select>
    <div class="strip">
      <button class="tool"><svg><use href="#t-filter"/></svg></button>
      <button class="tool"><svg><use href="#t-reset"/></svg></button>
      <button class="tool"><svg><use href="#t-snap"/></svg></button>
      <button class="drop"><svg><use href="#down"/></svg></button>
      <button class="tool"><svg><use href="#t-origin"/></svg></button>
      <button class="tool"><svg><use href="#t-hist"/></svg></button>
      <button class="tool"><svg><use href="#t-cubesel"/></svg></button>
      <button class="tool"><svg><use href="#t-rect"/></svg></button>
      <button class="drop"><svg><use href="#down"/></svg></button>
      <button class="tool"><svg><use href="#t-highlight"/></svg></button>
      <button class="tool"><svg><use href="#t-solid"/></svg></button>
      <button class="tool"><svg><use href="#t-nodes"/></svg></button>
      <button class="tool"><svg><use href="#t-line"/></svg></button>
      <button class="tool"><svg><use href="#t-mid"/></svg></button>
      <button class="tool"><svg><use href="#t-hook"/></svg></button>
      <button class="tool"><svg><use href="#t-poly"/></svg></button>
      <button class="tool"><svg><use href="#t-spline"/></svg></button>
      <button class="tool"><svg><use href="#t-cross"/></svg></button>
      <button class="tool"><svg><use href="#t-circle"/></svg></button>
      <button class="tool"><svg><use href="#t-quad"/></svg></button>
      <button class="tool"><svg><use href="#t-plus"/></svg></button>
      <button class="tool"><svg><use href="#t-mid"/></svg></button>
      <button class="tool"><svg><use href="#t-tangent"/></svg></button>
      <button class="tool"><svg><use href="#t-face"/></svg></button>
      <button class="tool"><svg><use href="#t-grid"/></svg></button>
    </div>
    <i class="sep"></i>
    <div class="strip view-strip">
      <button class="tool"><svg><use href="#v-fit"/></svg></button>
      <button class="tool"><svg><use href="#v-pan"/></svg></button>
      <button class="tool"><svg><use href="#v-rotate"/></svg></button>
      <button class="tool"><svg><use href="#v-persp"/></svg></button>
      <button class="tool"><svg><use href="#v-replace"/></svg></button>
      <button class="tool"><svg><use href="#v-layout"/></svg></button>
      <button class="drop"><svg><use href="#down"/></svg></button>
      <button class="tool"><svg><use href="#v-section"/></svg></button>
      <button class="drop"><svg><use href="#down"/></svg></button>
      <button class="tool"><svg><use href="#v-shade"/></svg></button>
      <button class="drop"><svg><use href="#down"/></svg></button>
      <button class="tool"><svg><use href="#v-play"/></svg></button>
      <button class="drop"><svg><use href="#down"/></svg></button>
    </div>
    <i class="sep"></i>
    <button class="drop ribbon-more"><svg><use href="#down"/></svg></button>
  </section>

  <main class="workspace">
    <aside class="rail">
      <button class="rail-gear"><svg><use href="#gear"/></svg></button>
      <button class="rail-active"><svg><use href="#r-asm"/></svg></button>
      <div class="rail-group">
        <svg><use href="#r-constr"/></svg>
        <svg><use href="#r-part"/></svg>
        <svg><use href="#r-books"/></svg>
        <svg><use href="#r-eye"/></svg>
        <svg><use href="#r-reuse"/></svg>
      </div>
      <div class="rail-group loose">
        <svg><use href="#r-info"/></svg>
        <svg><use href="#r-web"/></svg>
        <svg><use href="#r-clock"/></svg>
      </div>
      <div class="rail-group">
        <svg><use href="#r-spectrum"/></svg>
        <svg><use href="#r-role"/></svg>
        <svg><use href="#r-robot"/></svg>
        <span class="rail-empty"></span>
      </div>
    </aside>

    <section class="navigator">
      <div class="nav-head"><h2>装配导航器</h2><button class="pin" aria-label="还原"></button></div>
      <div class="tree-box">
        <div class="tree-head">描述性部件名 <span class="sort"></span></div>
        <ul class="tree">
          <li class="section"><span class="branch"></span><svg><use href="#folder"/></svg>截面</li>
          <li class="root"><span class="toggle">−</span><input type="checkbox" id="n0" checked><label for="n0"><svg><use href="#asm"/></svg>YN2</label></li>
          <li class="child"><span class="toggle">+</span><input type="checkbox" id="n1" checked><label for="n1"><svg><use href="#asm"/></svg>YN</label></li>
          <li class="child"><span class="toggle">+</span><input type="checkbox" id="n2" checked><label for="n2"><svg><use href="#asm"/></svg>YN</label></li>
          <li class="child"><span class="leaf"></span><input type="checkbox" id="n3" checked><label for="n3"><svg><use href="#part"/></svg>YN</label></li>
          <li class="child last"><span class="leaf"></span><input type="checkbox" id="n4" checked><label for="n4"><svg><use href="#part"/></svg>YN</label></li>
        </ul>
        <div class="hscroll">
          <svg viewBox="0 0 8 12"><path d="M7 1L2 6l5 5" fill="none" stroke="#444" stroke-width="2"/></svg>
          <span class="thumb"></span>
        </div>
      </div>
      <div class="splitter"></div>
      <div class="fold">预览</div>
      <div class="fold">相关性<svg viewBox="0 0 16 14"><path d="M2 1l6 10 6-10" fill="none" stroke="#0a6c8c" stroke-width="3"/></svg></div>
    </section>

    <section class="view">
      <div class="doc-tabs">
        <div class="doc-tab">
          <svg viewBox="0 0 16 16"><path d="M2 3l4-2 3 2v5l4-1 1 5-5 3H5l-3-3z" fill="#1c54d0" stroke="#0c2c8c"/><path d="M3 4l2-1 3 1v5l5 0" fill="none" stroke="#9cc4ff"/></svg>
          <span>YN210002A-ASM.prt</span>
          <svg class="mark" viewBox="0 0 12 12"><path d="M2 2h5l2 2v6H2z" fill="none" stroke="#fff" stroke-width="1.500"/><path d="M5 7l5-4" stroke="#fff" stroke-width="1.500"/></svg>
          <svg class="mark" viewBox="0 0 12 12"><path d="M2 2l7 8M9 2L2 10" stroke="#b4d4e0" stroke-width="1.300"/></svg>
        </div>
      </div>
      <div class="canvas">
        <i class="line-v top"></i>
        <i class="line-v bottom"></i>
        <i class="line-h"></i>
        <svg class="impeller" viewBox="0 0 1080 840" stroke="#333" stroke-width="3" stroke-linejoin="round">
          <path d="M42 400L36 470 42 560 78 624 146 688 232 740 344 778 452 796 608 796 708 780 828 742 918 690 988 628 1026 556 1032 470 1026 400z" fill="#206020"/>
          <path d="M1026 430L1031 470 1026 540 980 610 910 680 900 660 908 620 900 560 960 510 1004 470z" fill="#45cd45"/>
          <path d="M54 558C100 590 180 612 256 622L310 634 374 660V760L340 756 232 716 140 664 84 612z" fill="#45cd45"/>
          <path d="M54 568C120 606 190 624 256 630H306M256 614v18M52 446V560M56 450C70 480 80 490 90 500M136 546C180 580 240 600 260 612" fill="none"/>
          <path d="M408 766C520 744 590 710 646 656L780 624 864 588 860 702C800 740 700 766 604 774H430z" fill="#45cd45"/>
          <path d="M408 654L480 662H646M408 654V766M420 770C520 758 600 710 662 656M646 676C720 664 760 640 780 624M602 662l4 34M616 662v32M374 650V760M864 588V700M890 570V682M902 570C914 610 908 650 896 680" fill="none"/>
          <path d="M36 350L42 296 84 218 156 156 244 102 354 68 474 54H604L740 74 830 106 924 160 990 224 1026 296 1032 370 1004 446 954 512 864 570 770 612 660 638 530 649 410 640 280 610 186 568 106 510 54 446z" fill="#45cd45"/>
          <path d="M78 246L84 218 156 156 244 102 350 70 370 100 300 130 240 190 230 250z" fill="#38a438" stroke="none"/>
          <path d="M42 322L44 296 78 246 230 250 226 292z" fill="#44b844" stroke="none"/>
          <path d="M350 70L474 56 476 76 370 100z" fill="#44b844" stroke="none"/>
          <path d="M36 370L54 446 106 510 186 568 280 610 410 640 530 649 660 638 770 612 864 570 954 512 1004 446 1030 380 1026 430 1000 476 950 530 864 588 770 626 646 656 530 664 410 654 280 626 186 588 106 530 54 470z" fill="#206020"/>
          <path d="M224 304C230 430 370 494 532 494S836 430 842 304" fill="none"/>
          <path d="M230 250V310C240 420 380 486 532 486S826 420 838 310V250z" fill="#206020"/>
          <ellipse cx="533" cy="255" rx="303" ry="182" fill="#45cd45"/>
          <ellipse cx="533" cy="256" rx="284" ry="172" fill="#206020"/>
          <path d="M252 290L284 232 330 374C290 350 260 330 252 290z" fill="#45cd45"/>
          <path d="M284 214L344 196 358 184 380 176 452 154 446 205 390 240 362 316 330 290z" fill="#38a438"/>
          <path d="M284 224L300 204 344 198 330 240 340 290z" fill="#45cd45"/>
          <path d="M300 262L334 370 322 376 284 320z" fill="#38a438" stroke="none"/>
          <path d="M284 224L358 312M294 214L362 306M300 250L362 320M328 200L378 264M344 198C350 220 360 240 380 256M280 335L320 316M360 320L340 376M300 262L340 376M332 290V376" fill="none"/>
          <path d="M494 196L534 128 600 144 616 156 626 208 560 196z" fill="#45cd45"/>
          <path d="M560 196L600 146 616 156 626 208z" fill="#38a438" stroke="none"/>
          <path d="M616 156L636 176 640 158 704 178 636 216 626 208z" fill="#38a438"/>
          <path d="M500 192L540 130M508 194L546 134M516 194L556 136M548 192L590 146M446 205L452 154M488 196L494 150 520 146M640 158L704 178 760 212" fill="none"/>
          <path d="M684 248L780 216 796 236 804 256 808 296 702 288z" fill="#45cd45"/>
          <path d="M702 288L730 272 804 256 808 296z" fill="#38a438" stroke="none"/>
          <path d="M684 254L784 220M688 260L786 226M690 266L790 232M702 290L804 256" fill="none"/>
          <path d="M704 334L740 374 700 398 640 414 700 368z" fill="#38a438"/>
          <path d="M704 340L730 374M694 370H720M694 376H716M700 384L716 370" fill="none"/>
          <path d="M364 290C364 370 440 428 533 428S700 370 702 290z" fill="#206020"/>
          <ellipse cx="533" cy="296" rx="168" ry="102" fill="#45cd45"/>
          <path d="M400 350C420 380 500 400 556 398V374C480 378 430 358 414 330z" fill="#44b844" stroke="none"/>
          <ellipse cx="533" cy="284" rx="151" ry="91" fill="#45cd45"/>
          <ellipse cx="533" cy="284" rx="107" ry="65" fill="#206020"/>
          <path d="M251 270C260 370 390 430 533 430S806 370 815 270" fill="none" stroke="#45cd45" stroke-width="6"/>
          <path d="M474 51H604" stroke="#38a438"/>
          <path d="M452 55H624" stroke="#b030b0"/>
        </svg>
        <svg class="cursor" viewBox="0 0 28 28"><g fill="none" stroke="#fff"><circle cx="14" cy="14" r="10.500" stroke-dasharray="12.500 4" stroke-dashoffset="-2"/><path d="M14.500 0v28M0 13.500h28"/></g></svg>
        <svg class="axis" viewBox="0 0 30 22"><path d="M5.500 0v7M3 3h6" stroke="#1432d8" stroke-width="2"/><path d="M2.500 8.500h6l-6 9h6" fill="none" stroke="#1432d8"/><ellipse cx="21" cy="1" rx="5" ry="3" fill="#bbb"/></svg>
      </div>
    </section>

    <form class="dialog" onsubmit="return false">
      <div class="dialog-title">
        <svg><use href="#gear"/></svg>
        <h2>常用塑胶放收缩率</h2>
        <button type="button" aria-label="重置"><svg viewBox="0 0 14 14"><path d="M3.500 3.500A5 5 0 1 0 9 2.500" fill="none" stroke="#fff" stroke-width="1.800"/><path d="M1 3h5v5z" fill="#fff"/></svg></button>
        <button type="button" aria-label="关闭"><svg viewBox="0 0 14 14"><path d="M2 2l10 10M12 2L2 12" stroke="#fff" stroke-width="2"/></svg></button>
      </div>
      <div class="dialog-body">
        <div class="row method">
          <label for="method">选择缩放方式</label>
          <div class="icon-select">
            <svg viewBox="0 0 18 14"><path d="M1.500 4.500h8v8h-8z" fill="#fff" stroke="#444"/><path d="M1 4.500l5-3h10v7l-5 4M5.500 5v7M10.500 4.500h1l5-3M6 4.500h6v8H6M12 4.500l4-3" fill="none" stroke="#d01c1c" stroke-width="1.300"/></svg>
            <select id="method" class="combo"><option>不均匀</option></select>
          </div>
        </div>
        <hr>
        <div class="row pick">
          <span class="pick-label"><svg><use href="#star"/></svg>选择缩放体 (0)</span>
          <button type="button" class="pick-button" aria-label="选择体"><svg viewBox="0 0 24 24"><path d="M2 6l10-5 10 4v12l-11 6-9-5z" fill="#fba51c" stroke="#f02c14"/><path d="M2 6l10-5 10 4-10 5z" fill="#fddc3c"/><path d="M12 10l10-5v12l-11 6z" fill="#f7942c"/><path d="M2 6l10 4 10-5M12 10l-1 13" fill="none" stroke="#f02c14"/></svg></button>
        </div>
        <div class="row point">
          <span class="point-label"><svg><use href="#star"/></svg>缩放点</span>
          <button type="button" class="point-dialog" aria-label="点对话框"><svg viewBox="0 0 22 22"><path d="M12.500 4v8M8 7.500h9" stroke="#111"/><path d="M3 10c0 4 3 6 6 5" fill="none" stroke="#e07c1c" stroke-width="2"/><path d="M7 11l4 4-5 3z" fill="#e07c1c"/><path d="M11 17.500h2M14 17.500h2M17 17.500h2" stroke="#111" stroke-width="2"/></svg></button>
          <button type="button" class="point-mode" aria-label="端点"><svg viewBox="0 0 24 24"><path d="M2 22L21 3" stroke="#111"/><circle cx="20" cy="4" r="2.500" fill="#d81414"/></svg></button>
          <button type="button" class="point-drop"><svg><use href="#down"/></svg></button>
        </div>
        <hr>
        <div class="row">
          <label for="material" class="indent">选择材料</label>
          <select id="material" class="combo material"><option>ABS（丙烯腈）</option></select>
        </div>
        <div class="row factor">
          <label for="fx">X 方向收缩率</label>
          <div class="edit-combo"><input type="text" id="fx" value="1.005"><svg><use href="#down"/></svg></div>
        </div>
        <div class="row factor">
          <label for="fy">Y 方向收缩率</label>
          <div class="edit-combo"><input type="text" id="fy" value="1.005"><svg><use href="#down"/></svg></div>
        </div>
        <div class="row factor">
          <label for="fz">Z 方向收缩率</label>
          <div class="edit-combo"><input type="text" id="fz" value="1.005"><svg><use href="#down"/></svg></div>
        </div>
        <hr class="double">
        <label for="info" class="info-label">材料信息</label>
        <textarea id="info" readonly>ABS（丙烯腈）
收缩率：1.004~1.006
熔料温度：210~280℃
模具温度：25~70℃
注射压力：500~1000Bar
注射速度：中高速度</textarea>
        <div class="row library">
          <span>编辑材料库</span>
          <button type="button" class="library-button" aria-label="编辑材料库"><svg viewBox="0 0 32 32"><path d="M16 1l4 3h6v6l1 2 4 4-4 4-1 2v6h-6l-4 3-4-3H6v-6l-1-2-4-4 4-4 1-2V4h6z" fill="#fddc74" stroke="#f01c1c"/><circle cx="16" cy="16" r="7.500" fill="#d8f4fc" stroke="#1c74d8" stroke-width="1.500"/></svg></button>
        </div>
        <svg class="expand"><use href="#down"/></svg>
      </div>
      <div class="dialog-foot">
        <button type="button" disabled>确定</button>
        <button type="button" disabled>应用</button>
        <button type="button" class="cancel">取消</button>
      </div>
    </form>
  </main>

  <footer class="status">
    <svg viewBox="0 0 16 16"><path d="M0 0h16v16H0z" fill="#dcdcdc"/><path d="M3 14l2-10 3 5 3-6 3 4M2 5l5-2 6 5M8 9l-2 5M11 8l-1 6" fill="none" stroke="#8c8c8c"/></svg>
    <svg><use href="#fit"/></svg>
  </footer>

  <script>
    // first factor is ready to be typed over
    var first = document.getElementById("fx");
    first.focus();
    first.select();
  </script>
</body>
</html>
```
FILE: styles.css
```css
* {
  box-sizing: border-box;
}

body {
  margin: 0;
  min-height: 100vh;
  display: flex;
  flex-direction: column;
  background: #fbfbfb;
  border-left: 1px solid #a0a0a0;
  color: #000;
  font-family: "Open Sans", "Noto Sans CJK SC", sans-serif;
  font-size: 14px;
  line-height: 20px;
}

button, input, select, textarea {
  font: inherit;
  color: inherit;
  margin: 0;
  padding: 0;
  border: 0;
  background: none;
  border-radius: 0;
}

h1, h2 {
  margin: 0;
  font-weight: normal;
}

svg {
  display: block;
  flex: none;
  width: 16px;
  height: 16px;
}

.sprite {
  position: absolute;
  width: 0;
  height: 0;
}

.sep {
  flex: none;
  width: 1px;
  height: 28px;
  background: #d8d8d8;
  margin: 0 6px;
}

.tool {
  flex: none;
  width: 16px;
  height: 16px;
}

.drop {
  flex: none;
  width: 8px;
}

.drop svg, .caret {
  width: 8px;
  height: 5px;
}

/* title bar */
.titlebar {
  display: flex;
  align-items: center;
  height: 37px;
  white-space: nowrap;
}

.logo {
  width: 37px;
  padding-left: 1px;
  color: #8296ac;
  font-size: 24px;
  font-weight: bold;
  line-height: 37px;
}

.group {
  display: flex;
  align-items: center;
  gap: 7px;
}

.save-group {
  padding-left: 3px;
}

.text-tool {
  display: flex;
  align-items: center;
  gap: 4px;
  white-space: nowrap;
}

.more {
  border-top: 1px solid #000;
  padding-top: 3px;
  margin-left: 3px;
}

.title {
  display: flex;
  gap: 20px;
  margin-left: 9px;
  font-size: 15px;
}

.latin {
  font-size: 16px;
}

.version {
  margin-left: 8px;
  font-size: 15px;
}

.siemens {
  margin-left: 6px;
  color: #009999;
  font-family: Inter, sans-serif;
  font-size: 15px;
  font-weight: 800;
}

.window-buttons {
  display: flex;
  gap: 16px;
  margin-left: auto;
  margin-right: 11px;
}

.window-buttons svg {
  width: 14px;
  height: 14px;
}

/* ribbon tabs */
.tabs {
  display: flex;
  align-items: stretch;
  height: 32px;
  margin-right: 2px;
  gap: 1px;
  background: #d9d9d9;
  font-size: 16px;
  white-space: nowrap;
}

.tabs button {
  padding: 0 10px;
}

.tabs .file-tab {
  width: 88px;
  margin-right: 1px;
  padding: 0;
  background: #55a0b9;
  color: #fff;
}

.tabs .custom {
  padding: 0 9px;
  font-size: 17px;
}

.tabs .active {
  background: #fbfbfb;
  color: #0a6c8c;
  box-shadow: inset 0 1px #a0a0a0;
}

.search {
  display: flex;
  align-items: center;
  flex: 0 1 157px;
  min-width: 0;
  height: 24px;
  margin: 4px 0 4px auto;
  padding: 0 3px 0 1px;
  border: 1px solid #a0a0a0;
  background: #fbfbfb;
}

.search input {
  flex: 1;
  min-width: 0;
  font-size: 14px;
}

.search input::placeholder {
  color: #b4b4b4;
  opacity: 1;
}

.tab-tools {
  display: flex;
  align-items: center;
  gap: 10px;
  margin: 0 8px 0 10px;
}

.fit {
  width: 18px;
  height: 18px;
}

/* ribbon */
.ribbon {
  display: flex;
  height: 106px;
  border-bottom: 1px solid #d8d8d8;
}

.ribbon-group {
  width: 1404px;
  margin: 5px 0 4px;
  border-right: 1px solid #d8d8d8;
}

.ribbon-body {
  display: flex;
  height: 80px;
  padding-left: 10px;
}

.big-buttons {
  display: flex;
  gap: 8px;
}

.big-buttons button {
  display: block;
  align-self: flex-start;
  white-space: nowrap;
}

.big-buttons .wide {
  margin-right: 4px;
}

.big-buttons svg {
  width: 32px;
  height: 32px;
  margin: 0 auto 5px;
}

.small-buttons {
  display: grid;
  grid-template-rows: repeat(3, 20px);
  grid-auto-flow: column;
  justify-content: start;
  gap: 6px 9px;
  margin-left: 10px;
}

.small-buttons button {
  display: flex;
  align-items: center;
  gap: 4px;
  white-space: nowrap;
}

.ribbon-foot {
  display: flex;
  align-items: center;
  height: 18px;
  color: #0a6c8c;
}

.ribbon-foot span {
  flex: 1;
  padding-right: 8px;
  text-align: center;
}

.ribbon-foot .drop {
  margin-right: 8px;
  color: #000;
}

.ribbon-more {
  align-self: flex-end;
  margin: 0 9px 8px auto;
}

/* selection bar */
.selection-bar {
  display: flex;
  align-items: center;
  height: 36px;
  border-bottom: 1px solid #a0a0a0;
}

.menu {
  padding-left: 7px;
}

.combo {
  appearance: none;
  height: 24px;
  padding: 0 20px 0 2px;
  border: 1px solid #a0a0a0;
  background: #fbfbfb url("data:image/svg+xml,%3Csvg xmlns='http://www.w3.org/2000/svg' width='10' height='5'%3E%3Cpath d='M0 0h10L5 5z'/%3E%3C/svg%3E") no-repeat right 6px center;
}

.type-filter {
  width: 167px;
  margin-left: 8px;
}

.scope-filter {
  width: 176px;
  margin-left: 9px;
}

.strip {
  display: flex;
  align-items: center;
  gap: 9px;
  margin: 0 2px 0 8px;
}

.strip .drop {
  width: 10px;
  margin-left: -5px;
}

.view-strip {
  margin: 0 6px;
}

/* workspace */
.workspace {
  position: relative;
  display: flex;
  flex: 1;
  border-bottom: 1px solid #a0a0a0;
}

.rail {
  flex: none;
  width: 29px;
  background: #d9d9d9;
  border-right: 1px solid #a0a0a0;
}

.rail svg {
  width: 24px;
  height: 24px;
}

.rail button {
  display: block;
  width: 28px;
  padding-left: 3px;
}

.rail .rail-gear {
  height: 41px;
  padding: 0 0 14px 4px;
  border-bottom: 1px solid #a0a0a0;
}

.rail .rail-gear svg {
  width: 16px;
  height: 16px;
}

.rail .rail-active {
  width: 29px;
  height: 45px;
  background: #fbfbfb;
  border-bottom: 1px solid #a0a0a0;
}

.rail-group {
  display: flex;
  flex-direction: column;
  gap: 18px;
  margin-top: 18px;
  padding-left: 3px;
}

.rail-active + .rail-group {
  margin-top: 7px;
}

.rail-group.loose {
  gap: 30px;
  margin-top: 30px;
}

.rail-empty {
  width: 24px;
  height: 24px;
  border: 1px solid #909090;
}

.navigator {
  display: flex;
  flex-direction: column;
  flex: none;
  width: 252px;
  padding: 0 11px 6px 6px;
  border-right: 1px solid #a0a0a0;
  font-size: 15px;
}

.nav-head {
  display: flex;
  align-items: center;
  justify-content: space-between;
  height: 31px;
  padding: 3px 6px 0 4px;
}

.nav-head h2 {
  font-size: 15px;
}

.pin {
  width: 14px;
  height: 13px;
  border: 1px solid #000;
  border-top-width: 2px;
}

.tree-box {
  display: flex;
  flex-direction: column;
  flex: 1;
  border: 1px solid #d8d8d8;
  border-bottom: 0;
}

.tree-head {
  display: flex;
  align-items: center;
  gap: 18px;
  height: 25px;
  margin: 0 1px;
  padding: 2px 0 0 6px;
  border-bottom: 1px solid #d8d8d8;
}

.sort {
  border: 6px solid transparent;
  border-top: 0;
  border-bottom-color: #000;
}

.tree {
  flex: 1;
  margin: 0;
  padding: 0;
  list-style: none;
}

.tree li {
  display: flex;
  align-items: center;
  gap: 2px;
  height: 24px;
  padding-left: 5px;
}

.tree .section {
  padding-left: 10px;
}

.branch {
  align-self: flex-end;
  width: 8px;
  height: 12px;
  border: 1px dotted #a0a0a0;
  border-width: 1px 0 0 1px;
}

.tree .root {
  font-weight: bold;
}

.tree .child {
  margin-left: 19px;
}

.tree label {
  display: flex;
  align-items: center;
  gap: 3px;
}

.toggle {
  width: 11px;
  height: 11px;
  border: 1px solid #c4c4c4;
  background: #fbfbfb;
  font-size: 13px;
  font-weight: normal;
  line-height: 8px;
  text-align: center;
}

.leaf {
  width: 6px;
  height: 24px;
  margin-left: 5px;
  border-left: 1px dotted #a0a0a0;
}

.last .leaf {
  height: 12px;
  align-self: flex-start;
  border-bottom: 1px dotted #a0a0a0;
}

.tree input {
  appearance: none;
  width: 13px;
  height: 13px;
  margin-left: 4px;
  border: 1px solid #000;
}

.tree input:checked {
  background: url("data:image/svg+xml,%3Csvg xmlns='http://www.w3.org/2000/svg' width='11' height='11'%3E%3Cpath d='M1.500 4.500l3 4 5-7' fill='none' stroke='%23e01414' stroke-width='2.500'/%3E%3C/svg%3E") center;
}

.hscroll {
  display: flex;
  align-items: center;
  height: 22px;
  gap: 7px;
  padding: 0 0 4px 7px;
}

.hscroll svg {
  width: 8px;
  height: 12px;
}

.thumb {
  width: 150px;
  height: 19px;
  background: #d9d9d9;
}

.splitter {
  height: 5px;
  background: #d9d9d9;
  border-top: 1px solid #a0a0a0;
  border-bottom: 1px solid #a0a0a0;
}

.fold {
  display: flex;
  align-items: center;
  justify-content: space-between;
  height: 28px;
  padding: 2px 5px 0 6px;
  border-bottom: 2px solid #d8d8d8;
  color: #0a6c8c;
  font-size: 18px;
}

.fold svg {
  height: 14px;
}

.view {
  display: flex;
  flex-direction: column;
  flex: 1;
  min-width: 0;
  margin-right: 2px;
}

.doc-tabs {
  display: flex;
  height: 26px;
  border-bottom: 2px solid #3c88a4;
}

.doc-tab {
  display: flex;
  align-items: center;
  gap: 5px;
  padding: 0 5px 0 4px;
  background: #55a0b9;
  color: #fff;
  font-size: 16px;
}

.mark {
  width: 12px;
  height: 12px;
}

/* crosshair and model sit on the free canvas */
.canvas {
  position: relative;
  flex: 1;
  overflow: hidden;
  background: #000;
}

.impeller {
  position: absolute;
  left: 398px;
  top: 213px;
  width: 360px;
  height: 280px;
}

.line-v, .line-h {
  position: absolute;
  background: #fff;
}

.line-v {
  left: 240px;
  width: 1px;
}

.line-v.top {
  top: 0;
  height: 199px;
}

.line-v.bottom {
  top: 263px;
  bottom: 0;
}

.line-h {
  left: 272px;
  right: 0;
  top: 231px;
  height: 1px;
}

.cursor {
  position: absolute;
  left: 226px;
  top: 218px;
  width: 28px;
  height: 28px;
}

.axis {
  position: absolute;
  left: 50px;
  top: 628px;
  width: 30px;
  height: 22px;
}

/* dialog */
.dialog {
  position: absolute;
  left: 124px;
  top: 78px;
  width: 380px;
  border: 1px solid #d8d8d8;
  border-top: 0;
  background: #fbfbfb;
  font-size: 15px;
}

.dialog-title {
  display: flex;
  align-items: center;
  gap: 8px;
  height: 27px;
  margin: 0 -1px;
  padding: 0 10px 0 8px;
  background: #55a0b9;
  color: #fff;
}

.dialog-title h2 {
  flex: 1;
  font-size: 18px;
}

.dialog-title button svg {
  width: 14px;
  height: 14px;
}

.dialog-body {
  padding: 8px 9px 0;
}

.row {
  display: flex;
  align-items: center;
  justify-content: space-between;
  margin-bottom: 2px;
}

.row .combo {
  height: 28px;
}

.dialog hr {
  margin: 0 0 3px;
  border: 0;
  border-top: 1px solid #d8d8d8;
}

.dialog .double {
  height: 5px;
  margin-bottom: 2px;
  border-bottom: 1px solid #d8d8d8;
}

.icon-select {
  display: flex;
  align-items: center;
  width: 139px;
  padding-left: 4px;
  border: 1px solid #a0a0a0;
}

.icon-select svg {
  width: 18px;
  height: 14px;
}

.icon-select .combo {
  flex: 1;
  height: 26px;
  border: 0;
}

.pick {
  gap: 2px;
}

.pick-label, .point-label {
  display: flex;
  align-items: center;
  flex: 1;
  height: 32px;
  gap: 6px;
  padding-left: 2px;
}

.pick-label svg, .point-label svg {
  width: 12px;
  height: 12px;
}

.pick-label, .pick-button {
  background: #fddf74;
}

.pick-button {
  width: 32px;
  height: 32px;
  padding: 4px;
}

.pick-button svg, .point-mode svg {
  width: 24px;
  height: 24px;
}

.point-dialog {
  width: 24px;
  height: 24px;
  margin-right: 2px;
  border: 1px solid #a0a0a0;
}

.point-dialog svg {
  width: 22px;
  height: 22px;
}

.point-mode, .point-drop {
  height: 32px;
  background: #70b0ca;
}

.point-mode {
  width: 31px;
  padding-left: 4px;
}

.point-drop {
  width: 22px;
  padding-left: 7px;
  border-left: 1px solid #fff;
  color: #fff;
}

.point-drop svg {
  width: 8px;
  height: 5px;
}

.indent {
  padding-left: 1px;
}

.material {
  width: 152px;
}

.edit-combo {
  display: flex;
  align-items: center;
  width: 110px;
  height: 26px;
  padding: 0 5px 0 4px;
  border: 1px solid #a0a0a0;
}

.edit-combo input {
  flex: 1;
  min-width: 0;
  outline: none;
  font-size: 16px;
}

.edit-combo input::selection {
  background: #0078d7;
  color: #fff;
}

.edit-combo svg {
  width: 10px;
  height: 5px;
}

.info-label {
  display: block;
  padding: 2px 0;
}

.dialog textarea {
  display: block;
  width: 100%;
  height: 184px;
  padding: 1px 2px;
  border: 1px solid #a0a0a0;
  background: #fbfbfb;
  resize: none;
  outline: none;
}

.library {
  margin-top: 2px;
}

.library-button {
  width: 40px;
  height: 40px;
  padding: 3px;
  border: 1px solid #a0a0a0;
}

.library-button svg {
  width: 32px;
  height: 32px;
  background: #d9d9d9;
}

.expand {
  width: 12px;
  height: 6px;
  margin: 8px auto 3px;
}

.dialog-foot {
  display: flex;
  justify-content: flex-end;
  gap: 5px;
  margin: 0 5px;
  padding: 8px 10px 10px 0;
  border-top: 1px solid #d8d8d8;
}

.dialog-foot button {
  width: 60px;
  height: 28px;
  border: 1px solid #a0a0a0;
}

.dialog-foot button:disabled {
  color: #b0b0b0;
}

.dialog-foot .cancel {
  background: #d9d9d9;
}

/* status bar */
.status {
  display: flex;
  align-items: center;
  justify-content: flex-end;
  gap: 4px;
  height: 30px;
  padding: 0 57px 1px 0;
  border-bottom: 7px solid #55a0b9;
  box-shadow: inset 0 -1px #a0a0a0;
}
```
